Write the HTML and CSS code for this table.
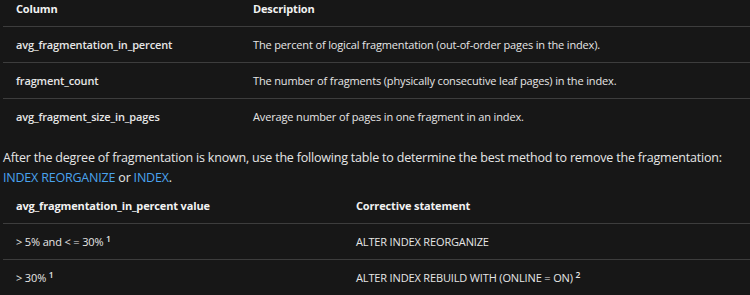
FILE: index.html
```html
<!DOCTYPE html>
<html>
<head>
<meta charset="utf-8">
<link rel="stylesheet" href="styles.css">
</head>
<body>
<div class="page">
  <table class="grid grid-a">
    <thead>
      <tr><th class="c1">Column</th><th>Description</th></tr>
    </thead>
    <tbody>
      <tr><td class="c1 strong">avg_fragmentation_in_percent</td><td>The percent of logical fragmentation (out-of-order pages in the index).</td></tr>
      <tr><td class="c1 strong">fragment_count</td><td>The number of fragments (physically consecutive leaf pages) in the index.</td></tr>
      <tr><td class="c1 strong">avg_fragment_size_in_pages</td><td>Average number of pages in one fragment in an index.</td></tr>
    </tbody>
  </table>
  <p class="para">After the degree of fragmentation is known, use the following table to determine the best method to remove the fragmentation: <a class="link" href="#">INDEX REORGANIZE</a> or <a class="link" href="#">INDEX</a>.</p>
  <table class="grid grid-b">
    <thead>
      <tr><th class="c1">avg_fragmentation_in_percent value</th><th>Corrective statement</th></tr>
    </thead>
    <tbody>
      <tr><td class="c1">&gt; 5% and &lt; = 30% <sup>1</sup></td><td>ALTER INDEX REORGANIZE</td></tr>
      <tr><td class="c1">&gt; 30% <sup>1</sup></td><td>ALTER INDEX REBUILD WITH (ONLINE = ON) <sup>2</sup></td></tr>
    </tbody>
  </table>
</div>
</body>
</html>
```

FILE: styles.css
```css
html, body {
  margin: 0;
  padding: 0;
  background: #171717;
}
body {
  font-family: "Open Sans", "Noto Sans", sans-serif;
  color: #e6e6e6;
  overflow: hidden;
}
.page {
  padding: 0 0 0 3px;
}
.grid {
  width: 100%;
  border-collapse: collapse;
  font-size: 11px;
  letter-spacing: -0.15px;
}
.grid th, .grid td {
  text-align: left;
  padding: 0 0 0 13px;
  height: 35px;
  border-bottom: 1px solid #3d3d3d;
  vertical-align: middle;
}
.grid th {
  font-weight: 700;
  color: #f2f2f2;
}
.grid-a thead th {
  height: 26px;
  padding-bottom: 8px;
  box-sizing: border-box;
}
.grid-a tbody tr:last-child td {
  border-bottom: none;
}
.grid-a .c1 { width: 237px; box-sizing: border-box; }
.grid-b .c1 { width: 340px; box-sizing: border-box; }
.strong {
  font-weight: 600;
}
.grid sup {
  font-size: 8.5px;
  font-weight: 600;
  vertical-align: 4px;
  line-height: 0;
}
.para {
  margin: 14px 0 0 0;
  font-size: 12.5px;
  letter-spacing: -0.2px;
  line-height: 20px;
}
.link {
  color: #4aa3ee;
  text-decoration: none;
}
```
